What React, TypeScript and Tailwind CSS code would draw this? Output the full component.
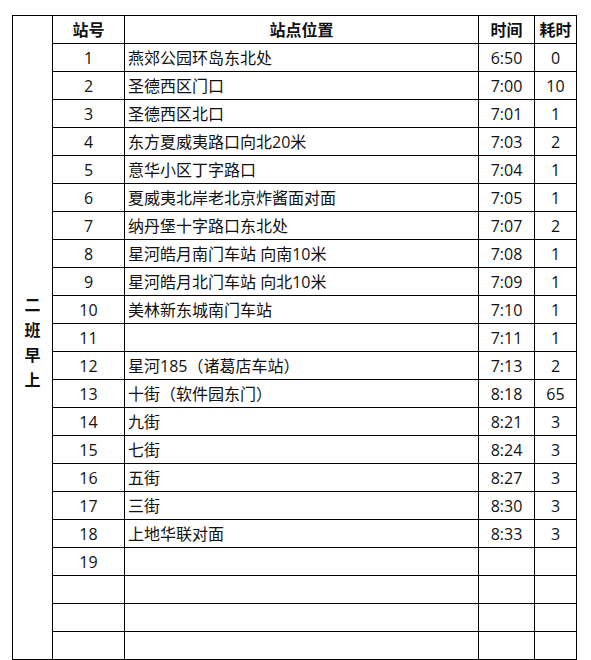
const stops: [string, string, string, string][] = [
  ["1", "燕郊公园环岛东北处", "6:50", "0"],
  ["2", "圣德西区门口", "7:00", "10"],
  ["3", "圣德西区北口", "7:01", "1"],
  ["4", "东方夏威夷路口向北20米", "7:03", "2"],
  ["5", "意华小区丁字路口", "7:04", "1"],
  ["6", "夏威夷北岸老北京炸酱面对面", "7:05", "1"],
  ["7", "纳丹堡十字路口东北处", "7:07", "2"],
  ["8", "星河皓月南门车站 向南10米", "7:08", "1"],
  ["9", "星河皓月北门车站 向北10米", "7:09", "1"],
  ["10", "美林新东城南门车站", "7:10", "1"],
  ["11", "", "7:11", "1"],
  ["12", "星河185（诸葛店车站）", "7:13", "2"],
  ["13", "十街（软件园东门）", "8:18", "65"],
  ["14", "九街", "8:21", "3"],
  ["15", "七街", "8:24", "3"],
  ["16", "五街", "8:27", "3"],
  ["17", "三街", "8:30", "3"],
  ["18", "上地华联对面", "8:33", "3"],
  ["19", "", "", ""],
  ["", "", "", ""],
  ["", "", "", ""],
  ["", "", "", ""],
];

const cell = "border border-black p-0 h-[28px]";

export default function App() {
  return (
    <div
      className="w-[591px] h-[660px] bg-white text-[16px] text-[#111]"
      style={{ fontFamily: '"Open Sans", "Noto Sans CJK SC", sans-serif' }}
    >
      <table className="ml-[12px] mt-[15px] border-collapse table-fixed w-[564px]">
        <colgroup>
          <col className="w-[40px]" />
          <col className="w-[72px]" />
          <col className="w-[354px]" />
          <col className="w-[56px]" />
          <col className="w-[42px]" />
        </colgroup>
        <tbody>
          <tr>
            <td rowSpan={stops.length + 1} className="border border-black p-0 text-center align-middle">
              <div className="flex flex-col items-center font-bold leading-[25px] pt-[10px]">
                {"二班早上".split("").map((c) => (
                  <span key={c}>{c}</span>
                ))}
              </div>
            </td>
            <th className={`${cell} text-center font-bold`}>站号</th>
            <th className={`${cell} text-center font-bold`}>站点位置</th>
            <th className={`${cell} text-center font-bold`}>时间</th>
            <th className={`${cell} text-center font-bold`}>耗时</th>
          </tr>
          {stops.map(([no, place, time, cost], i) => (
            <tr key={i}>
              <td className={`${cell} text-center`}>{no}</td>
              <td className={`${cell} pl-[3px] text-left whitespace-nowrap`}>{place}</td>
              <td className={`${cell} text-center`}>{time}</td>
              <td className={`${cell} text-center`}>{cost}</td>
            </tr>
          ))}
        </tbody>
      </table>
    </div>
  );
}
